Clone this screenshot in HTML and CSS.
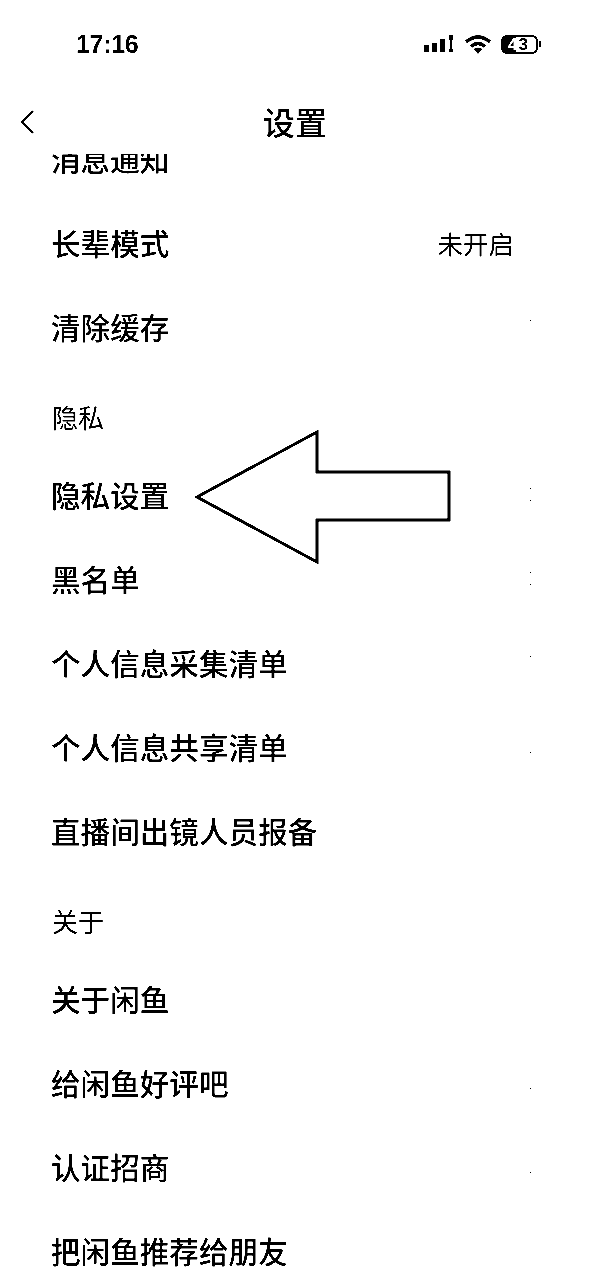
FILE: index.html
```html
<!DOCTYPE html>
<html>
  <head>
    <title>设置</title>
    <meta name="viewport" content="width=device-width, initial-scale=1" />
    <link rel="stylesheet" href="styles.css">
  </head>
  <body>
    <div class="phone">
      <div class="status-bar">
        <span class="time">17:16</span>
        <div class="status-icons">
          <svg class="signal" width="30" height="18" viewBox="0 0 30 18">
            <rect x="0" y="10" width="5" height="7" rx="1" />
            <rect x="8" y="8" width="5" height="9" rx="1" />
            <rect x="16" y="4" width="5" height="13" rx="1" />
            <rect x="25" y="0" width="4" height="5" />
            <rect x="26" y="5" width="2" height="9" />
            <rect x="25" y="14" width="4" height="3" />
          </svg>
          <svg class="wifi" width="26" height="19" viewBox="0 0 26 19">
            <path d="M1 7 Q13 -3 25 7" fill="none" stroke="#000" stroke-width="3.4" />
            <path d="M6 11.5 Q13 5.5 20 11.5" fill="none" stroke="#000" stroke-width="3.2" />
            <path d="M8.5 14 L13 19 L17.5 14 Q13 11 8.5 14 Z" />
          </svg>
          <div class="battery">
            <span class="battery-fill"></span>
            <span class="battery-num">4<b>3</b></span>
          </div>
          <span class="battery-cap"></span>
        </div>
      </div>

      <div class="nav-bar">
        <svg class="back" width="16" height="26" viewBox="0 0 16 26">
          <path d="M14 2 L3 13 L14 24" fill="none" stroke="#000" stroke-width="2.4" />
        </svg>
        <span class="nav-title">设置</span>
      </div>

      <div class="list">
        <div class="row row-clipped"><span>消息通知</span></div>
        <div class="row"><span>长辈模式</span><span class="row-value">未开启</span></div>
        <div class="row"><span>清除缓存</span><i class="chevron tip-top"></i></div>

        <div class="section">隐私</div>
        <div class="row"><span>隐私设置</span><i class="chevron tip-top tip-bottom"></i></div>
        <div class="row"><span>黑名单</span><i class="chevron tip-top tip-bottom"></i></div>
        <div class="row"><span>个人信息采集清单</span><i class="chevron tip-top"></i></div>
        <div class="row"><span>个人信息共享清单</span><i class="chevron tip-bottom"></i></div>
        <div class="row"><span>直播间出镜人员报备</span></div>

        <div class="section">关于</div>
        <div class="row"><span>关于闲鱼</span></div>
        <div class="row"><span>给闲鱼好评吧</span><i class="chevron tip-bottom"></i></div>
        <div class="row"><span>认证招商</span><i class="chevron tip-bottom"></i></div>
        <div class="row"><span>把闲鱼推荐给朋友</span></div>
      </div>

      <!-- arrow drawn over the screenshot -->
      <svg class="arrow" width="590" height="1280" viewBox="0 0 590 1280">
        <path d="M197 497 L317 432 L317 472 L449 472 L449 520 L317 520 L317 562 Z" fill="none" stroke="#000" stroke-width="3" />
      </svg>
    </div>
  </body>
</html>
```

FILE: styles.css
```css
* {
  box-sizing: border-box;
}

body {
  margin: 0;
  background: #fff;
  color: #000;
  font-family: "Noto Sans CJK SC", "Liberation Sans", sans-serif;
}

/* contrast gives the hard, aliased edges of the source image */
.phone {
  position: relative;
  width: 590px;
  height: 1280px;
  overflow: hidden;
  background: #fff;
  filter: contrast(4);
}

/* Status bar */
.status-bar {
  display: flex;
  justify-content: space-between;
  align-items: center;
  height: 88px;
  padding: 0 49px 0 76px;
}

.time {
  font-family: "Liberation Sans", sans-serif;
  font-size: 25px;
  font-weight: 700;
  letter-spacing: -0.3px;
}

.status-icons {
  display: flex;
  align-items: center;
}

.signal {
  margin-right: 11px;
}

.wifi {
  margin-right: 10px;
}

.battery {
  position: relative;
  width: 37px;
  height: 19px;
  border: 2px solid #000;
  border-radius: 6px;
  background: #fff;
  overflow: hidden;
}

.battery-fill {
  position: absolute;
  left: 0;
  top: 0;
  bottom: 0;
  width: 13px;
  background: #000;
}

.battery-num {
  position: absolute;
  left: 5px;
  top: -1px;
  font-family: "Liberation Sans", sans-serif;
  font-size: 17px;
  line-height: 17px;
  font-weight: 700;
  color: #fff;
}

.battery-num b {
  margin-left: 1px;
  color: #000;
}

.battery-cap {
  width: 2px;
  height: 6px;
  margin-left: 1px;
  background: #000;
}

/* Nav bar */
.nav-bar {
  position: relative;
  z-index: 1;
  display: flex;
  justify-content: center;
  align-items: center;
  height: 66px;
  background: #fff;
}

.back {
  position: absolute;
  left: 19px;
  top: 21px;
}

.nav-title {
  font-size: 32px;
  font-weight: 500;
  line-height: 70px;
}

/* Settings list */
.list {
  overflow: hidden;
}

.row {
  display: flex;
  justify-content: space-between;
  align-items: center;
  height: 84px;
  padding: 0 76px 0 51px;
  font-size: 29.6px;
  font-weight: 500;
}

.row-clipped {
  margin-top: -38px;
}

.row-value {
  font-size: 25.5px;
  font-weight: 400;
}

/* only the two tips of each chevron survive in the source */
.chevron {
  width: 1px;
  height: 13px;
  margin-right: -17px;
}

.tip-top {
  border-top: 1px solid #000;
}

.tip-bottom {
  border-bottom: 1px solid #000;
}

.section {
  display: flex;
  align-items: center;
  height: 84px;
  padding: 13px 52px 0;
  font-size: 26px;
}

.arrow {
  position: absolute;
  left: 0;
  top: 0;
  pointer-events: none;
}
```
